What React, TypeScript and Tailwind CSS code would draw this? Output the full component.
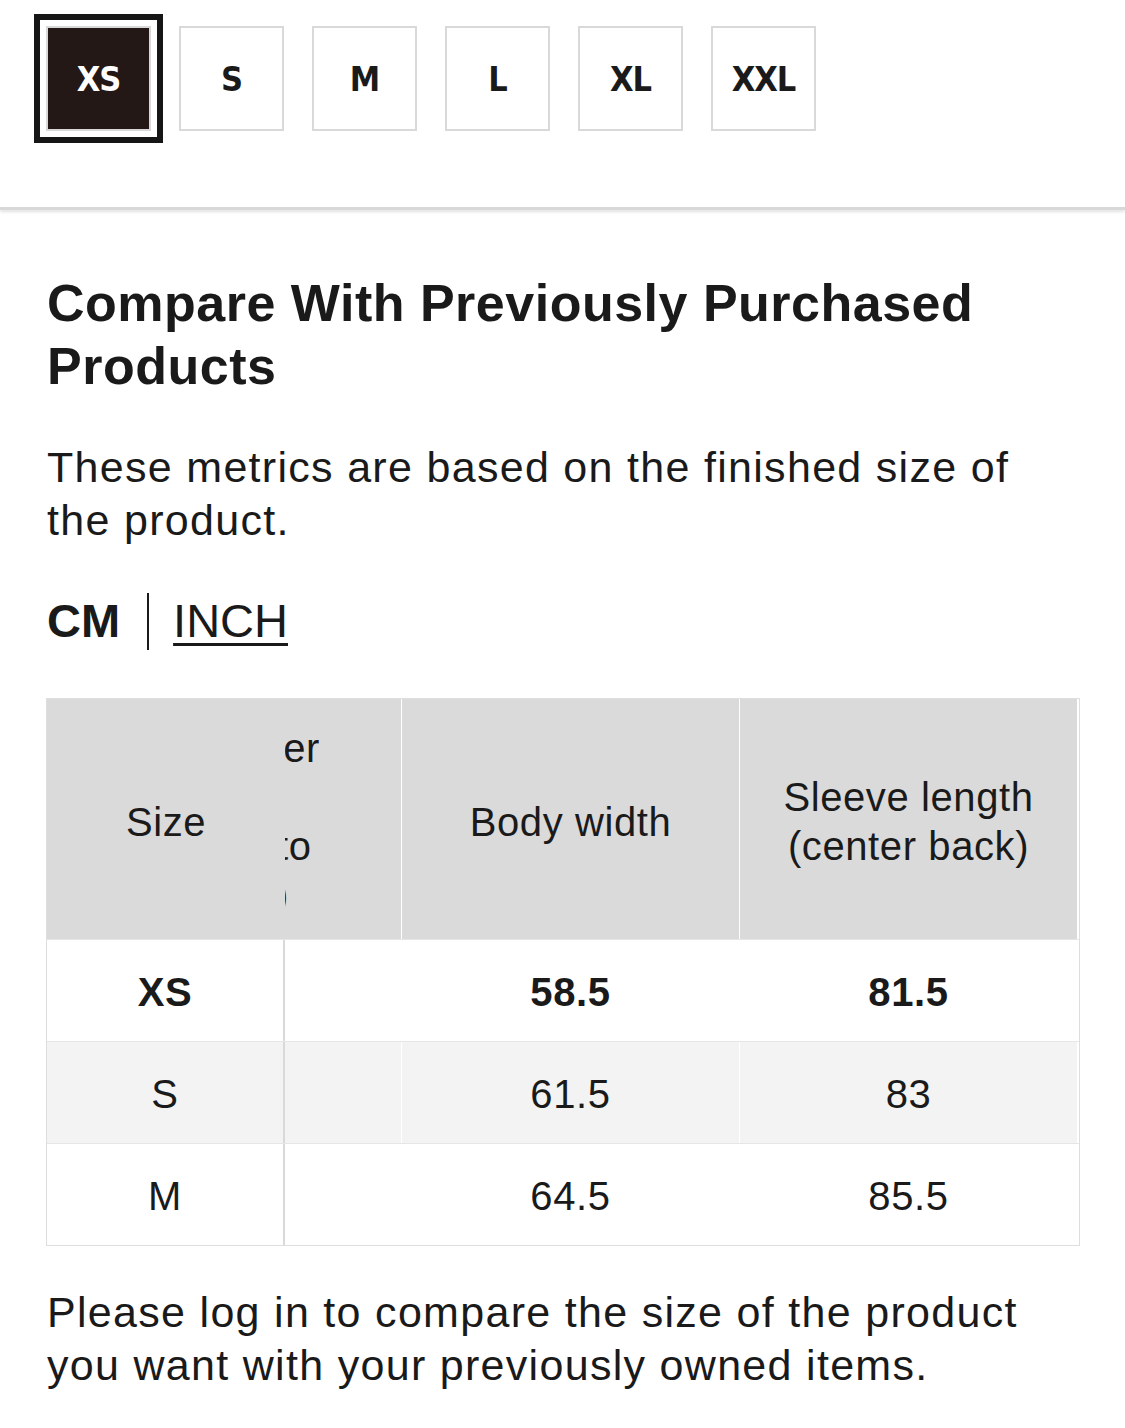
const sizes = ["XS", "S", "M", "L", "XL", "XXL"];

const rows = [
  { size: "XS", body: "58.5", sleeve: "81.5", bold: true, bg: "bg-white" },
  { size: "S", body: "61.5", sleeve: "83", bold: false, bg: "bg-[#f3f3f3]" },
  { size: "M", body: "64.5", sleeve: "85.5", bold: false, bg: "bg-white" },
];

function SizeButton({ label, active }: { label: string; active?: boolean }) {
  return (
    <button
      className={
        active
          ? "w-[105px] h-[105px] flex items-center justify-center border-2 border-[#d9d9d9] bg-[#231815] text-white shadow-[0_0_0_6px_#fff,0_0_0_12px_#161616]"
          : "w-[105px] h-[105px] flex items-center justify-center border-2 border-[#d9d9d9] bg-white text-[#1a1a1a]"
      }
    >
      <span className="font-['DejaVu_Sans_Condensed','DejaVu_Sans',sans-serif] font-bold text-[34px] tracking-[-1px] leading-none">
        {label}
      </span>
    </button>
  );
}

export default function App() {
  return (
    <div className="w-[1125px] min-h-[1428px] bg-white text-[#1a1a1a] font-['Liberation_Sans',Arial,sans-serif]">
      {/* size picker */}
      <div className="h-[207px] pl-[46px] pt-[26px] flex gap-[28px] items-start">
        {sizes.map((s, i) => (
          <SizeButton key={s} label={s} active={i === 0} />
        ))}
      </div>
      <div className="h-[3px] bg-[#d8d8d8] shadow-[0_2px_3px_rgba(0,0,0,0.12)]" />

      <div className="px-[47px]">
        <h2 className="mt-[62px] text-[52px] leading-[63px] font-bold tracking-[0.5px]">
          Compare With Previously Purchased Products
        </h2>

        <p className="mt-[43px] text-[43px] leading-[53px] tracking-[1.3px]">
          These metrics are based on the finished size of the product.
        </p>

        {/* unit switch */}
        <div className="mt-[46px] flex items-center h-[57px] text-[47px]">
          <span className="font-bold">CM</span>
          <span className="ml-[27px] mr-[24px] w-[2px] h-[57px] bg-[#1a1a1a]" />
          <span className="underline underline-offset-[6px] decoration-[3px]">INCH</span>
        </div>
      </div>

      {/* size table */}
      <div className="ml-[46px] mt-[48px] w-[1034px] border border-[#dedede] bg-white text-[40px] leading-[49px] tracking-[0.6px]">
        <div className="flex h-[240px]">
          <div className="w-[238px] bg-[#dadada] flex items-center justify-center pt-[6px]">Size</div>
          <div className="w-[116px] bg-[#dadada] overflow-hidden flex flex-col justify-center whitespace-nowrap pt-[6px]">
            <span className="ml-[-130px]">Shoulder</span>
            <span>&nbsp;</span>
            <span className="ml-[-8px]">to</span>
            <span className="ml-[-10px]">)</span>
          </div>
          <div className="w-[1px]" />
          <div className="w-[337px] bg-[#dadada] flex items-center justify-center pt-[6px]">Body width</div>
          <div className="w-[1px]" />
          <div className="w-[337px] bg-[#dadada] flex items-center justify-center text-center pt-[6px]">
            Sleeve length
            <br />
            (center back)
          </div>
        </div>
        {rows.map((r) => (
          <div key={r.size} className={"flex h-[102px] border-t border-[#e6e6e6] " + (r.bold ? "font-bold" : "")}>
            <div className={"w-[238px] border-r-2 border-[#d9d9d9] flex items-center justify-center pt-[4px] " + r.bg}>
              {r.size}
            </div>
            <div className={"w-[116px] " + r.bg} />
            <div className="w-[1px]" />
            <div className={"w-[337px] flex items-center justify-center pt-[4px] " + r.bg}>{r.body}</div>
            <div className="w-[1px]" />
            <div className={"w-[337px] flex items-center justify-center pt-[4px] " + r.bg}>{r.sleeve}</div>
          </div>
        ))}
      </div>

      <p className="mx-[47px] mt-[40px] text-[43px] leading-[53px] tracking-[1.3px]">
        Please log in to compare the size of the product you want with your previously owned items.
      </p>
    </div>
  );
}
